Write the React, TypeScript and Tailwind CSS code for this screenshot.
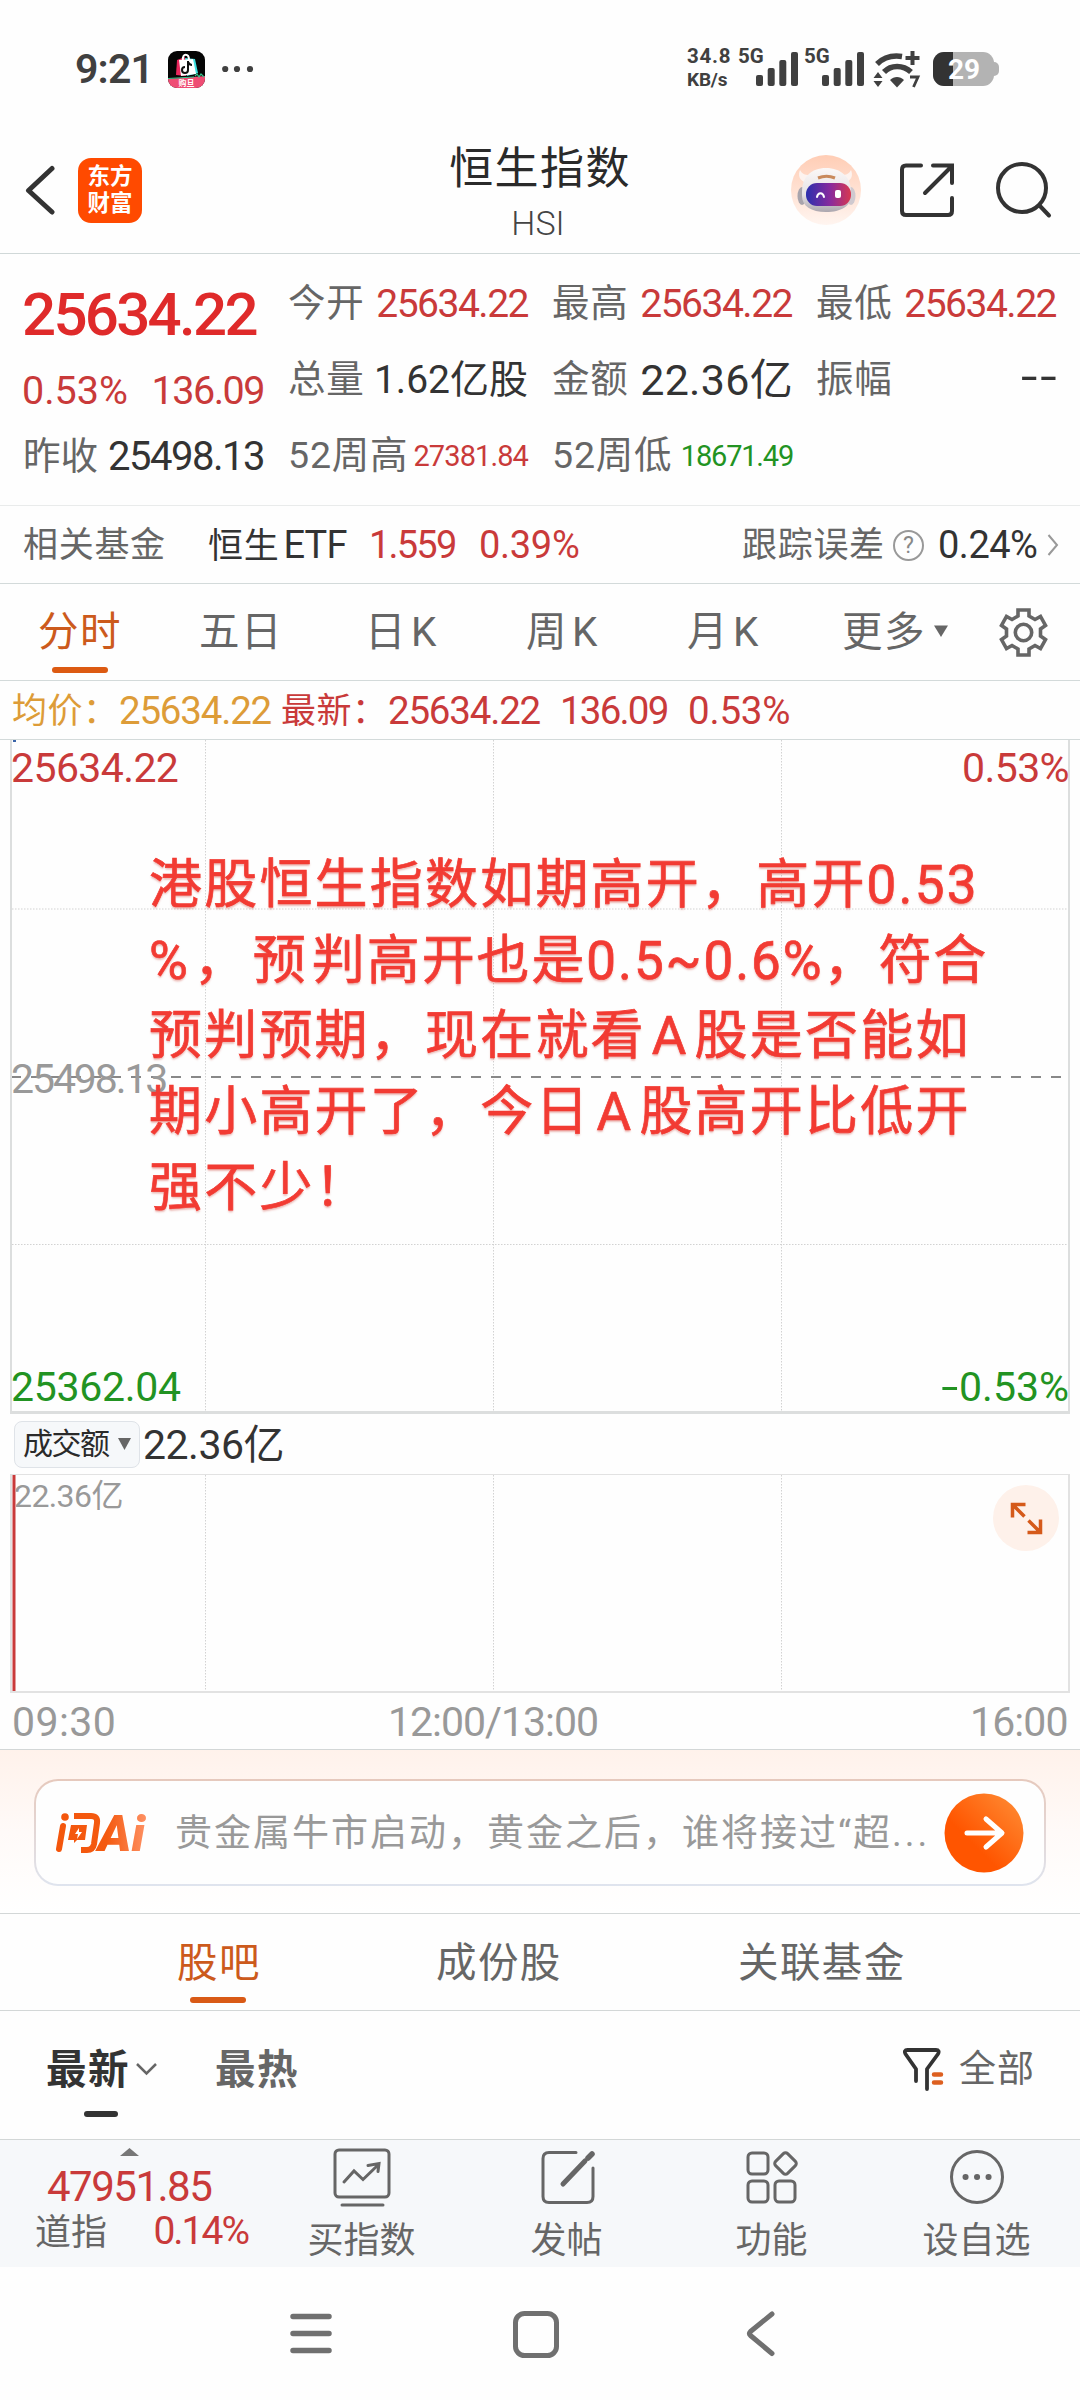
import React from 'react';
import clsx from 'clsx';

interface QuoteItem {
  label: string;
  value: string;
  valueClass: string;
}

// top row / middle row / bottom row, read left to right
const QUOTES: QuoteItem[] = [
  { label: '今开', value: '25634.22', valueClass: 'text-[39px] tracking-[-1.5px] text-[#c93a3a]' },
  { label: '最高', value: '25634.22', valueClass: 'text-[39px] tracking-[-1.5px] text-[#c93a3a]' },
  { label: '最低', value: '25634.22', valueClass: 'text-[39px] tracking-[-1.5px] text-[#c93a3a]' },
  { label: '总量', value: '1.62亿股', valueClass: 'text-[39px] tracking-[0px] text-[#333]' },
  { label: '金额', value: '22.36亿', valueClass: 'text-[43px] tracking-[0.3px] mr-[-1px] text-[#333]' },
  { label: '振幅', value: '--', valueClass: 'origin-right scale-x-[1.35] text-[44px] tracking-[2px] mr-[-3px] -mt-[6px] text-[#333]' },
  { label: '52周高', value: '27381.84', valueClass: 'text-[29px] tracking-[-0.9px] text-[#c93a3a]' },
  { label: '52周低', value: '18671.49', valueClass: 'text-[29px] tracking-[-1.2px] mr-[-1px] text-[#229322]' },
];

const OVERLAY_LINES = [
  '港股恒生指数如期高开，高开0.53',
  '%，预判高开也是0.5~0.6%，符合',
  '预判预期，现在就看A股是否能如',
  '期小高开了，今日A股高开比低开',
  '强不少！',
];

const SignalBars = () => (
  <svg width="42" height="34" viewBox="0 0 42 34" fill="#404040">
    <rect x="0" y="23" width="7" height="11" rx="2" />
    <rect x="11.7" y="16" width="7" height="18" rx="2" />
    <rect x="23.3" y="8" width="7" height="26" rx="2" />
    <rect x="35" y="0" width="7" height="34" rx="2" />
  </svg>
);

const StatusBar = () => (
  <div className="flex h-[110px] text-[#404040]">
    <span className="mt-[49px] ml-[75px] w-[93px] text-[41px] leading-[41px] font-semibold tracking-[-0.8px]">
      9:21
    </span>
    <svg className="mt-[51px]" width="37" height="37" viewBox="0 0 37 37">
      <clipPath id="shop">
        <rect width="37" height="37" rx="9" />
      </clipPath>
      <g clipPath="url(#shop)">
        <rect width="37" height="37" fill="#050505" />
        <path d="M9 9l8-3 1 19-10-1z" fill="#e8265c" />
        <path d="M17 7l10 1 3 14-11 3z" fill="#3de0e0" />
        <path d="M11 9l14-1 3 15-15 2z" fill="#fff" />
        <path d="M15 9c-1-7 6-7 6 0" fill="none" stroke="#fff" strokeWidth="2" />
        <path d="M20 10v9a3 3 0 1 1-3-3M20 11c1 2 2 3 4 3" fill="none" stroke="#111" strokeWidth="2" />
        <path d="M0 28l37-3v12H0z" fill="#ef4d74" />
        <path d="M0 27.500l26-1.500M27 25l2-2 2 3 2-3 3 3" fill="none" stroke="#35c48c" strokeWidth="1.200" />
        <text x="18.500" y="35" textAnchor="middle" fontSize="8" fontWeight="700" fill="#fff">购旦</text>
      </g>
    </svg>
    <svg className="mt-[65px] ml-[17px]" width="32" height="8" viewBox="0 0 32 8" fill="#404040">
      <circle cx="3.200" cy="4" r="3.100" />
      <circle cx="15" cy="4" r="3.100" />
      <circle cx="28" cy="4" r="3.100" />
    </svg>
    <div className="mt-[46px] ml-[433px] w-[51px] font-bold">
      <div className="text-[20.500px] leading-[20px] tracking-[0.800px]">34.8</div>
      <div className="mt-[4px] text-[19px] leading-[19px] tracking-[-0.200px]">KB/s</div>
    </div>
    <span className="mt-[46px] -mr-[12px] w-[30px] text-[20.500px] leading-[20px] font-bold">5G</span>
    <div className="mt-[52px] w-[48px]">
      <SignalBars />
    </div>
    <span className="mt-[46px] -mr-[12px] w-[30px] text-[20.500px] leading-[20px] font-bold">5G</span>
    <div className="mt-[52px] w-[51px]">
      <SignalBars />
    </div>
    <svg className="mt-[50px]" width="50" height="38" viewBox="0 0 50 38">
      <g fill="none" stroke="#404040" strokeWidth="5.500">
        <path d="M4 14C10 8 19 5 29 6.500" />
        <path d="M11 22c7-7.500 19-7.500 27 0" />
      </g>
      <path d="M17 30c4-4 10-4 14 0l-7 7.500z" fill="#404040" />
      <path d="M39.500 1v14M32.500 8h14" stroke="#404040" strokeWidth="4" />
      <path d="M5 22l4.500 6h-9zM5 37l4.500-6h-9z" fill="#404040" />
      <path d="M37 27h8l-4.500 10" fill="none" stroke="#404040" strokeWidth="2.800" />
    </svg>
    <svg className="mt-[52px] ml-[10px]" width="66" height="35" viewBox="0 0 66 35">
      <clipPath id="batt">
        <rect width="61" height="34" rx="11" />
      </clipPath>
      <rect x="55" y="10" width="11" height="14" rx="5" fill="#b3b3b3" />
      <g clipPath="url(#batt)">
        <rect width="61" height="34" fill="#b3b3b3" />
        <rect width="20" height="34" fill="#333" />
      </g>
      <text x="31" y="27" textAnchor="middle" fontSize="28" fontWeight="700" fill="#fff">29</text>
    </svg>
  </div>
);

const Robot = () => (
  <svg width="70" height="70" viewBox="0 0 70 70">
    <defs>
      <linearGradient id="halo" x1="0" y1="0" x2="0" y2="1">
        <stop offset="0" stopColor="#ffcdb5" />
        <stop offset="1" stopColor="#fff5f0" />
      </linearGradient>
      <linearGradient id="visor" x1="0" y1="0" x2="1" y2="0">
        <stop offset="0" stopColor="#2b2fae" />
        <stop offset="0.550" stopColor="#8a2a9c" />
        <stop offset="1" stopColor="#d8384f" />
      </linearGradient>
      <linearGradient id="shell" x1="0" y1="0" x2="0" y2="1">
        <stop offset="0" stopColor="#fbf8f7" />
        <stop offset="0.600" stopColor="#e6e2e5" />
        <stop offset="1" stopColor="#aba6ae" />
      </linearGradient>
    </defs>
    <circle cx="35" cy="35" r="35" fill="url(#halo)" />
    <path d="M9 15c-2 5-1 9 4 12l5-7c-4 0-7-1-9-5zM60 15c2 5 1 9-4 12l-5-7c4 0 7-1 9-5z" fill="#fdf3ef" />
    <ellipse cx="11" cy="41" rx="4.500" ry="9" fill="#a8a4ac" />
    <ellipse cx="60" cy="41" rx="4.500" ry="9" fill="#cfc9cf" />
    <path d="M11 37c0-15 9-24 24-24s25 9 25 24v4c0 10-10 16-25 16s-24-6-24-16z" fill="url(#shell)" />
    <path d="M27 23c5-2 12-2 17 0" stroke="#c98a5c" strokeWidth="3" fill="none" />
    <rect x="15" y="28" width="45" height="23" rx="11" fill="url(#visor)" />
    <path d="M26 42c1-5 6-5 7 0" stroke="#fff" strokeWidth="2" fill="none" strokeLinecap="round" />
    <rect x="44" y="35" width="6" height="8" rx="2" fill="#fff" />
  </svg>
);

const Header = () => (
  <header className="grid h-[144px] grid-cols-[440px_1fr_440px] border-b border-[#d0d8d8]">
    <div className="flex pt-[48px] pl-[24px]">
      <svg className="mt-[7px]" width="31" height="50" viewBox="0 0 31 50">
        <path d="M28 3.500L4.500 25.500 28 47" fill="none" stroke="#333" strokeWidth="5" strokeLinecap="round" strokeLinejoin="round" />
      </svg>
      <div className="ml-[23px] flex h-[65px] w-[64px] flex-col items-center rounded-[13px] bg-[#ff4a00] pt-[5px] text-[22.500px] leading-[27px] font-bold text-white">
        <span>东方</span>
        <span>财富</span>
      </div>
    </div>
    <div className="flex flex-col items-center">
      <h1 className="mt-[35px] text-[44px] leading-[48px] tracking-[1.400px] whitespace-nowrap text-[#2a2a2a]">恒生指数</h1>
      <span className="mt-[13px] mr-[4px] text-[34px] leading-[35px] font-light text-[#444]">HSI</span>
    </div>
    <div className="flex pt-[45px] pl-[151px]">
      <Robot />
      <svg className="mt-[7px] ml-[38px]" width="56" height="56" viewBox="0 0 56 56" fill="none" stroke="#333" strokeWidth="4" strokeLinecap="round">
        <path d="M22 3.500H7q-4 0-4 4V49q0 4 4 4h42q4 0 4-4V36" />
        <path d="M34 3.500h19V21M52 5L26 31" />
      </svg>
      <svg className="mt-[6px] ml-[41px]" width="56" height="58" viewBox="0 0 56 58" fill="none" stroke="#333" strokeWidth="4" strokeLinecap="round">
        <circle cx="26" cy="27" r="24" />
        <path d="M43.500 44.500L53 54.500" />
      </svg>
    </div>
  </header>
);

const QuoteCell: React.FC<{ item: QuoteItem }> = ({ item }) => (
  <div className="flex h-[76px] items-center justify-between whitespace-nowrap">
    <span className="text-[37.500px] tracking-[0.800px] text-[#666]">{item.label}</span>
    <span className={item.valueClass}>{item.value}</span>
  </div>
);

const QuotePanel = () => (
  <section className="flex h-[252px] gap-6 border-b border-[#e9ebeb] px-6 pt-[12px]">
    <div className="w-[240px] shrink-0 whitespace-nowrap text-[#c93a3a]">
      <div className="mt-[19px] -ml-[2px] h-[60px] text-[60px] leading-[60px] font-medium tracking-[-2.700px] text-[#df2a2a]">25634.22</div>
      <div className="mt-[26px] -ml-[2px] flex h-[40px] justify-between text-[39.500px] leading-[40px] tracking-[-1.500px]">
        <span className="tracking-[0px]">0.53%</span>
        <span>136.09</span>
      </div>
      <div className="mt-[26px] -ml-px flex h-[40px] items-center justify-between">
        <span className="text-[37.500px] text-[#666]">昨收</span>
        <span className="text-[40px] tracking-[-1.500px] text-[#333]">25498.13</span>
      </div>
    </div>
    <div className="grid flex-1 grid-cols-3 content-start gap-x-6">
      {QUOTES.map((item) => (
        <QuoteCell key={item.label} item={item} />
      ))}
    </div>
  </section>
);

const RelatedFund = () => (
  <section className="flex h-[78px] items-center border-b border-[#d3dada] pt-px pl-[23px] text-[38px] whitespace-nowrap">
    <span className="w-[185px] text-[35px] tracking-[0.700px] text-[#666]">相关基金</span>
    <span className="w-[161px] text-[35px] tracking-[0.700px] text-[#333]">
      恒生<span className="ml-[4px] text-[38px] tracking-[-0.800px]">ETF</span>
    </span>
    <span className="w-[110px] tracking-[-1.800px] text-[#c93a3a]">1.559</span>
    <span className="w-[263px] tracking-[-0.300px] text-[#c93a3a]">0.39%</span>
    <span className="w-[151px] text-[35px] tracking-[0.700px] text-[#666]">跟踪误差</span>
    <span className="flex h-[31px] w-[31px] items-center justify-center rounded-full border-2 border-[#999] text-[23px] leading-none text-[#888]">
      ?
    </span>
    <span className="ml-[14px] w-[109px] tracking-[-0.500px] text-[#333]">0.24%</span>
    <svg width="12" height="24" viewBox="0 0 12 24" fill="none" stroke="#999" strokeWidth="2">
      <path d="M1.500 2l8.500 10-8.500 10" />
    </svg>
  </section>
);

const ChartTabs = () => (
  <nav className="flex h-[97px] border-b border-[#d3dada] pl-[38px] text-[40.500px] leading-[97px] tracking-[1.500px] whitespace-nowrap text-[#666]">
    <div className="w-[161px] text-[#cc5a1c]">
      <div className="h-[83px]">分时</div>
      <div className="ml-[14px] h-[6px] w-[56px] rounded-full bg-[#dc5a12]" />
    </div>
    <span className="w-[166px]">五日</span>
    <span className="w-[161px]">
      日<span className="ml-[4px]">K</span>
    </span>
    <span className="w-[161px]">
      周<span className="ml-[4px]">K</span>
    </span>
    <span className="w-[155px]">
      月<span className="ml-[4px]">K</span>
    </span>
    <span className="w-[92px]">更多</span>
    <svg className="mt-[41px]" width="14" height="13" viewBox="0 0 14 13">
      <path d="M0 0.500h14L7 12z" fill="#666" />
    </svg>
    <svg className="mt-[24px] ml-[51px]" width="49" height="49" viewBox="0 0 49 49" fill="none" stroke="#666" strokeWidth="3.600">
      <path d="M19 2h11v6l6 3.500 5.500-3 5 9-5 3.500v7l5 3.500-5 9-5.500-3L30 41v6H19v-6l-6-3.500-5.500 3-5-9 5-3.500v-7l-5-3.500 5-9 5.500 3L19 8z" />
      <circle cx="24.500" cy="24.500" r="8.200" />
    </svg>
  </nav>
);

const AverageLine = () => (
  <div className="flex h-[59px] items-center border-b border-[#d3dada] pt-[2px] pl-[12px] text-[38.500px] tracking-[-1.200px] whitespace-nowrap text-[#c93a3a]">
    <span className="w-[107px] text-[35px] tracking-[0.500px] text-[#dd9c38]">均价：</span>
    <span className="w-[162px] text-[#dd9c38]">25634.22</span>
    <span className="w-[107px] text-[35px] tracking-[0.500px]">最新：</span>
    <span className="w-[172px]">25634.22</span>
    <span className="w-[128px] tracking-[-1.800px]">136.09</span>
    <span className="tracking-[-0.200px]">0.53%</span>
  </div>
);

const GRID_X = [193.5, 481.5, 769.5];

const PriceChart = () => (
  <section className="relative mx-[10px] flex h-[674px] flex-col justify-between border-x-2 border-b-[3px] border-[#dcdede] text-[41px] leading-[46px] tracking-[-0.600px]">
    <svg className="absolute inset-0" width="1056" height="671" viewBox="0 0 1056 671">
      {GRID_X.map((x) => (
        <line key={x} x1={x} x2={x} y1="0" y2="671" stroke="#d2d2d2" strokeWidth="1" strokeDasharray="1.500 1.500" />
      ))}
      <line x1="0" x2="1056" y1="169" y2="169" stroke="#d2d2d2" strokeWidth="1" strokeDasharray="1.500 1.500" />
      <line x1="0" x2="1056" y1="504.500" y2="504.500" stroke="#d2d2d2" strokeWidth="1" strokeDasharray="1.500 1.500" />
      <line x1="-1" x2="1052" y1="337" y2="337" stroke="#888" strokeWidth="2" strokeDasharray="10 10" />
      <rect x="1" y="0" width="3" height="2" fill="#3a64a8" />
    </svg>
    <div className="relative flex justify-between pt-[5px] text-[#c93a3a]">
      <span className="-ml-px">25634.22</span>
      <span className="-mr-px">0.53%</span>
    </div>
    <span className="relative mt-[2px] -ml-px tracking-[-2.100px] text-[#999]">25498.13</span>
    <div className="relative flex justify-between pb-px text-[#229322]">
      <span className="-ml-px tracking-[-0.300px]">25362.04</span>
      <span className="-mr-px tracking-[0px]">
        <span className="mr-[1px] inline-block origin-right scale-x-150">-</span>0.53%
      </span>
    </div>
    {/* caption laid over the chart */}
    <div className="absolute top-[108px] left-[137px] text-[53px] leading-[75.700px] tracking-[2.200px] whitespace-nowrap text-[#f23b33] [-webkit-text-stroke:0.700px_#f23b33] [text-shadow:0_2px_2px_rgba(200,60,50,0.350)]">
      {OVERLAY_LINES.map((line) => (
        <p key={line} className={clsx(line.startsWith('%') && 'tracking-[1.900px] first-letter:tracking-[6px]')}>
          {line.split('A').map((part, i) => (
            <React.Fragment key={part}>
              {i > 0 && <span className="mx-[6px]">A</span>}
              {part}
            </React.Fragment>
          ))}
        </p>
      ))}
    </div>
  </section>
);

const VolumeChart = () => (
  <section>
    <div className="flex h-[60px] items-center pl-[14px]">
      <div className="flex h-[47px] w-[126px] items-center rounded-[8px] border border-[#dfe3e8] bg-[#f6f8fa] pl-[8px] text-[30px] tracking-[-1.500px] whitespace-nowrap text-[#2a2a2a]">
        成交额
        <svg className="ml-[9px]" width="13" height="12" viewBox="0 0 13 12">
          <path d="M0 0h13L6.500 12z" fill="#666" />
        </svg>
      </div>
      <span className="mt-[2px] ml-[3px] text-[41px] tracking-[-0.500px] text-[#333]">22.36亿</span>
    </div>
    <div className="relative mx-[10px] h-[219px] border-x-2 border-t border-b-2 border-[#e2e2e2]">
      <svg className="absolute inset-0" width="1056" height="216" viewBox="0 0 1056 216">
        {GRID_X.map((x) => (
          <line key={x} x1={x} x2={x} y1="0" y2="216" stroke="#d2d2d2" strokeWidth="1" strokeDasharray="1.500 1.500" />
        ))}
        <rect x="0.500" y="0" width="3" height="216" fill="#c93a3a" />
      </svg>
      <div className="relative flex justify-between">
        <span className="pt-[5px] pl-[2px] text-[32px] leading-[32px] tracking-[-0.600px] text-[#999]">22.36亿</span>
        <div className="mt-[10px] mr-[9px] flex h-[66px] w-[66px] items-center justify-center rounded-full bg-[#fef1ea]">
          <svg width="33" height="33" viewBox="0 0 33 33" fill="none" stroke="#d55a1a" strokeWidth="3.500">
            <path d="M15.500 2.500h-13v13M3 3l11.500 11.500M17.500 30.500h13v-13M30 30L18.500 18.500" />
          </svg>
        </div>
      </div>
    </div>
    <div className="flex h-[57px] items-center border-b border-[#d3d7d7] pt-[2px] pl-[12px] text-[41px] text-[#999]">
      <span className="w-[376px] tracking-[0.400px]">09:30</span>
      <span className="w-[582px] tracking-[-1px]">12:00/13:00</span>
      <span className="tracking-[-0.900px]">16:00</span>
    </div>
  </section>
);

const AskBar = () => (
  <section className="h-[164px] border-b border-[#d3d7d7] bg-gradient-to-b from-[#fff2eb] via-[#fffaf8] to-white px-[34px] pt-[29px]">
    <div className="h-[107px] rounded-[24px] bg-gradient-to-b from-[#e6c9bd] to-[#dfe4ee] p-[2px]">
      <div className="flex h-full items-center rounded-[22px] bg-[#fefefe] pl-[19px]">
        <svg width="100" height="64" viewBox="0 -10 100 64">
          <defs>
            <linearGradient id="ask" x1="0" y1="0" x2="94" y2="0" gradientUnits="userSpaceOnUse">
              <stop offset="0" stopColor="#f4560c" />
              <stop offset="0.550" stopColor="#f45a10" />
              <stop offset="1" stopColor="#ff9468" />
            </linearGradient>
          </defs>
          <g fill="none" stroke="url(#ask)" strokeWidth="6" strokeLinecap="round">
            <path d="M8 15L4 38" />
            <path d="M19 5h17q7 0 6 7l-3 21q-1 6-7 6h-6" strokeLinecap="butt" />
          </g>
          <circle cx="10" cy="6" r="3.800" fill="url(#ask)" />
          <path d="M16 14h16l-2 15h-8l-3 3v-3h-6z" fill="url(#ask)" />
          <path d="M24 17l-4 6h3l-1 5 5-7h-3z" fill="#fff" />
          <text x="43" y="40" fontSize="49" fontWeight="900" fontStyle="italic" fill="url(#ask)" textLength="47" lengthAdjust="spacingAndGlyphs">
            Ai
          </text>
        </svg>
        <span className="ml-[20px] w-[769px] pt-px text-[37px] tracking-[2px] whitespace-nowrap text-[#999]">
          贵金属牛市启动，黄金之后，谁将接过“超<span className="tracking-[3px]">...</span>
        </span>
        <svg width="80" height="80" viewBox="0 0 80 80">
          <defs>
            <linearGradient id="go" x1="1" y1="0" x2="0.200" y2="0.800">
              <stop offset="0" stopColor="#ff9038" />
              <stop offset="0.800" stopColor="#ff5500" />
            </linearGradient>
          </defs>
          <circle cx="40" cy="40" r="39.500" fill="url(#go)" />
          <path d="M23 40h34M42 26l16 14-16 14" fill="none" stroke="#fff" strokeWidth="5" strokeLinecap="round" strokeLinejoin="round" />
        </svg>
      </div>
    </div>
  </section>
);

const CommunityTabs = () => (
  <nav className="flex h-[97px] border-b border-[#d3d7d7] pl-[177px] text-[40.500px] leading-[98px] tracking-[1.400px] whitespace-nowrap text-[#666]">
    <div className="w-[259px] text-[#cc5a1c]">
      <div className="h-[83px]">股吧</div>
      <div className="ml-[13px] h-[6px] w-[56px] rounded-full bg-[#d95a16]" />
    </div>
    <span className="w-[302px]">成份股</span>
    <span>关联基金</span>
  </nav>
);

const SortRow = () => (
  <div className="flex h-[129px] border-b border-[#d3d7d7] pl-[46px] text-[40.500px] leading-[118px] whitespace-nowrap">
    <div className="w-[90px] font-bold tracking-[1.400px] text-[#333]">
      <div className="h-[100px]">最新</div>
      <div className="ml-[38px] h-[6px] w-[34px] rounded-full bg-[#333]" />
    </div>
    <svg className="mt-[51px]" width="21" height="14" viewBox="0 0 21 14" fill="none" stroke="#666" strokeWidth="2.500">
      <path d="M1 2l9.500 9.500L20 2" />
    </svg>
    <span className="ml-[58px] w-[688px] font-bold tracking-[1.400px] text-[#666]">最热</span>
    <svg className="mt-[36px]" width="41" height="45" viewBox="0 0 41 45" fill="none" strokeLinecap="round" strokeLinejoin="round">
      <path d="M13 34V22L2.500 7q-2-4 2-4H33q4 0 2 4L24 22v20" stroke="#333" strokeWidth="3.800" />
      <path d="M31 27.500h7M31 35.500h7" stroke="#dd6020" strokeWidth="4.500" />
    </svg>
    <span className="ml-[15px] text-[37px] tracking-[1px] text-[#666]">全部</span>
  </div>
);

const ACTIONS = [
  {
    label: '买指数',
    icon: (
      <>
        <rect x="2" y="2" width="54" height="47" rx="4" />
        <path d="M11 34l10-11 9 8.500L45 17M35 17.500l11-2-1 8" />
        <path d="M9 57h41" />
      </>
    ),
  },
  {
    label: '发帖',
    icon: (
      <>
        <path d="M38 4.500H11q-6 0-6 6v38q0 6 6 6h38q6 0 6-6V20" />
        <path d="M25 36l22-23" strokeWidth="5" />
        <path d="M50 10l4-4" strokeWidth="5.500" />
      </>
    ),
  },
  {
    label: '功能',
    icon: (
      <>
        <rect x="5" y="5" width="20" height="21" rx="4" />
        <rect x="5" y="33" width="20" height="21" rx="4" />
        <rect x="32" y="33" width="20" height="21" rx="4" />
        <rect x="34" y="7" width="17" height="17" rx="3" transform="rotate(45 42.500 15.500)" />
      </>
    ),
  },
  {
    label: '设自选',
    icon: (
      <>
        <circle cx="29" cy="29" r="25.500" />
        <path d="M17.500 29h.1M29 29h.1M40.500 29h.1" strokeWidth="6" />
      </>
    ),
  },
];

const BottomBar = () => (
  <footer className="flex h-[127px] bg-[#f6f8fa] whitespace-nowrap text-[#666]">
    <div className="w-[259px] pt-[8px]">
      <svg className="ml-[120px]" width="19" height="8" viewBox="0 0 19 8">
        <path d="M0 8L9.500 0 19 8z" fill="#777" />
      </svg>
      <div className="mt-[10px] ml-[47px] text-[42px] leading-[42px] tracking-[-1.500px] text-[#c93a3a]">47951.85</div>
      <div className="flex h-[46px] items-center justify-between pr-[11px] pl-[35px]">
        <span className="pt-[4px] text-[36px]">道指</span>
        <span className="text-[39px] tracking-[-2px] text-[#c93a3a]">0.14%</span>
      </div>
    </div>
    {ACTIONS.map((action) => (
      <div key={action.label} className="flex w-[205px] flex-col items-center">
        <svg className="mt-[8px]" width="58" height="60" viewBox="0 0 58 60" fill="none" stroke="#666" strokeWidth="3" strokeLinecap="round">
          {action.icon}
        </svg>
        <span className="mt-[13px] text-[36px] leading-[40px]">{action.label}</span>
      </div>
    ))}
  </footer>
);

const SystemNav = () => (
  <div className="flex h-[133px] bg-[#fefefe] pt-[44px] pl-[289px]">
    <svg width="44" height="46" viewBox="0 0 44 46" stroke="#707070" strokeWidth="5.500" strokeLinecap="round">
      <path d="M4 5.500h36M4 22.500h36M4 39.500h36" />
    </svg>
    <svg className="ml-[179px]" width="48" height="48" viewBox="0 0 48 48" fill="none" stroke="#707070" strokeWidth="5">
      <rect x="3.500" y="2.500" width="41" height="42" rx="9" />
    </svg>
    <svg className="ml-[186px]" width="30" height="46" viewBox="0 0 30 46" fill="none" stroke="#707070" strokeWidth="5" strokeLinecap="round" strokeLinejoin="round">
      <path d="M26 3L4.500 20.500q-2 2 0 4L26 42.500" />
    </svg>
  </div>
);

export default function App() {
  return (
    <div
      className={clsx(
        'h-[2400px] w-[1080px] overflow-hidden bg-[#fefefe]',
        "font-[Roboto,'Noto_Sans_CJK_SC',sans-serif] leading-none"
      )}
    >
      <StatusBar />
      <Header />
      <QuotePanel />
      <RelatedFund />
      <ChartTabs />
      <AverageLine />
      <PriceChart />
      <VolumeChart />
      <AskBar />
      <CommunityTabs />
      <SortRow />
      <BottomBar />
      <SystemNav />
    </div>
  );
}
